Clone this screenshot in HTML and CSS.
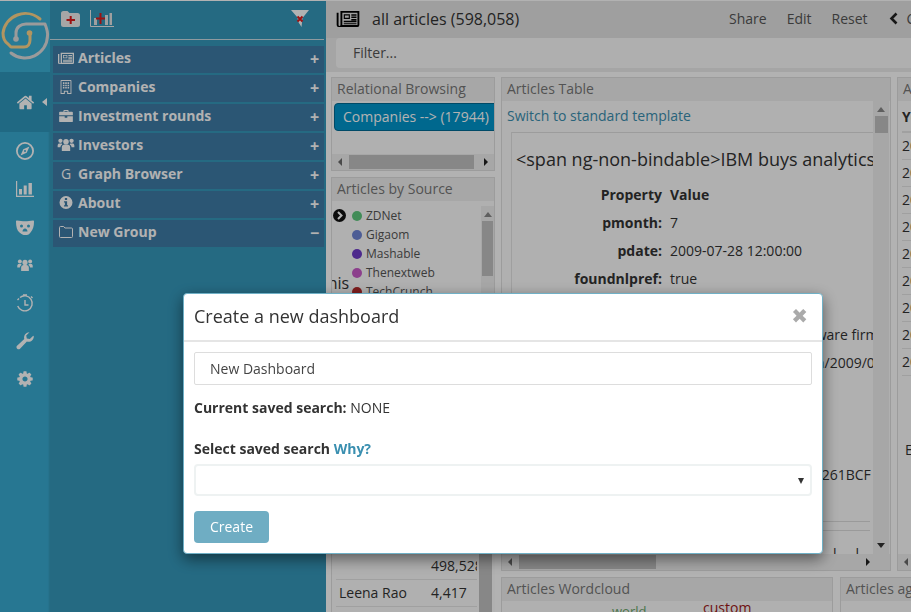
FILE: index.html
```html
<!DOCTYPE html>
<html lang="en">
<head>
<meta charset="utf-8">
<title>all articles</title>
<link rel="stylesheet" href="styles.css">
</head>
<body>
<svg class="defs" width="0" height="0">
  <symbol id="i-news" viewBox="0 0 24 18"><path d="M0 3h2v13a1 1 0 0 0 2 0V1h20v15a2 2 0 0 1-2 2H2a2 2 0 0 1-2-2zm6 0v13a3 3 0 0 1 0 0h16V3zm1.500 1.500h6.500v5H7.500zm1.200 1.200v2.600h4.100V5.700zM15.500 4.500H21V6h-5.500zm0 2.500H21v1.500h-5.500zm0 2.500H21V11h-5.500zM7.500 11.500H21V13H7.500zm0 2.500H21v1.200H7.500z" fill-rule="evenodd"/></symbol>
  <symbol id="i-building" viewBox="0 0 14 18"><path d="M1 0h12a1 1 0 0 1 1 1v17H8.500v-3h-3v3H0V1a1 1 0 0 1 1-1zm.2 1.200v15.600h3v-3h5.600v3h3V1.200zM3 3h2v2H3zm3 0h2v2H6zm3 0h2v2H9zM3 6h2v2H3zm3 0h2v2H6zm3 0h2v2H9zM3 9h2v2H3zm3 0h2v2H6zm3 0h2v2H9z" fill-rule="evenodd"/></symbol>
  <symbol id="i-case" viewBox="0 0 16 14"><path d="M5 2V1a1 1 0 0 1 1-1h4a1 1 0 0 1 1 1v1h4a1 1 0 0 1 1 1v3H0V3a1 1 0 0 1 1-1zm1.200 0h3.600V1.200H6.200zM0 7.200h6.500V9h3V7.200H16V13a1 1 0 0 1-1 1H1a1 1 0 0 1-1-1z" fill-rule="evenodd"/></symbol>
  <symbol id="i-users" viewBox="0 0 18 14"><circle cx="9" cy="4" r="3"/><circle cx="3" cy="3" r="2.300"/><circle cx="15" cy="3" r="2.300"/><path d="M4.500 14V10c0-2 1.500-3 3-3h3c1.500 0 3 1 3 3v4zM0 10V8c0-1.500 1-2.200 2-2.200h2.500A4 4 0 0 0 5 7c-1 .5-1.800 1.500-2 3zm18 0V8c0-1.500-1-2.200-2-2.200h-2.500A4 4 0 0 1 13 7c1 .5 1.800 1.500 2 3z"/></symbol>
  <symbol id="i-info" viewBox="0 0 14 14"><path d="M7 0a7 7 0 1 1 0 14A7 7 0 0 1 7 0zM5.800 2.200v2h2.400v-2zM4.800 5.600v1.300h1v3H4.800v1.400h4.400V9.900h-1V5.600z" fill-rule="evenodd"/></symbol>
  <symbol id="i-folder" viewBox="0 0 14 12"><path d="M1.500.5h3.200l1.200 1.500h6.600a1 1 0 0 1 1 1v7.500a1 1 0 0 1-1 1h-11a1 1 0 0 1-1-1V1.500a1 1 0 0 1 1-1z" fill="none" stroke="currentColor"/></symbol>
  <symbol id="i-home" viewBox="0 0 1792 1792"><path d="M1472 992v480q0 26-19 45t-45 19h-384v-384h-256v384h-384q-26 0-45-19t-19-45v-480q0-1 .5-3t.5-3l575-474 575 474q1 2 1 6zm223-69l-62 74q-8 9-21 11h-3q-13 0-21-7l-692-577-692 577q-12 8-24 7-13-2-21-11l-62-74q-8-10-7-23.500t11-21.500l719-599q32-26 76-26t76 26l244 204v-195q0-14 9-23t23-9h192q14 0 23 9t9 23v408l219 182q10 8 11 21.500t-7 23.500z"/></symbol>
  <symbol id="i-cog" viewBox="0 0 1792 1792"><path d="M1152 896q0-106-75-181t-181-75-181 75-75 181 75 181 181 75 181-75 75-181zm512-109v222q0 12-8 23t-20 13l-185 28q-19 54-39 91 35 50 107 138 10 12 10 25t-9 23q-27 37-99 108t-94 71q-12 0-26-9l-138-108q-44 23-91 38-16 136-29 186-7 28-36 28h-222q-14 0-24.500-8.500t-11.500-21.500l-28-184q-49-16-90-37l-141 107q-10 9-25 9-14 0-25-11-126-114-165-168-7-10-7-23 0-12 8-23 15-21 51-66.500t54-70.500q-27-50-41-99l-183-27q-13-2-21-12.500t-8-23.500v-222q0-12 8-23t19-13l186-28q14-46 39-92-40-57-107-138-10-12-10-24 0-10 9-23 26-36 98.500-107.500t94.500-71.500q13 0 26 10l138 107q44-23 91-38 16-136 29-186 7-28 36-28h222q14 0 24.500 8.500t11.500 21.500l28 184q49 16 90 37l142-107q9-9 24-9 13 0 25 10 129 119 165 170 7 8 7 22 0 12-8 23-15 21-51 66.500t-54 70.500q26 50 41 98l183 28q13 2 21 12.500t8 23.500z"/></symbol>
</svg>

<div class="app">
  <nav class="rail">
    <div class="logo">
      <svg width="50" height="71" viewBox="0 1 50 71" fill="none" stroke-width="3" stroke-linecap="round" stroke-linejoin="round">
        <path d="M40 19A22.500 22.500 0 0 0 3 33C3 38 5 42 8 44L11 47H24C28 47 30 44 30 40V33" stroke="#ffd68a"/>
        <path d="M16 39V33C16 27 21 24 26 24H45C47 29 48 32 47.500 36A22.500 22.500 0 0 1 11 53" stroke="#dedede"/>
        <circle cx="16" cy="39" r="2.800" fill="#dedede" stroke="none"/>
        <circle cx="29.500" cy="33" r="2.800" fill="#ffd68a" stroke="none"/>
      </svg>
    </div>
    <div class="rail-home">
      <svg class="r-ico" width="19" height="19"><use href="#i-home"/></svg>
      <span class="home-caret"></span>
    </div>
    <ul class="rail-list">
      <li><svg width="18" height="18" viewBox="0 0 18 18"><path d="M9 0a9 9 0 1 1 0 18A9 9 0 0 1 9 0zm0 1.800a7.200 7.200 0 1 0 0 14.400A7.200 7.200 0 0 0 9 1.800zM13.500 4.500l-2.800 6.200-6.200 2.800 2.800-6.200zM9 8a1 1 0 1 0 0 2 1 1 0 0 0 0-2z" fill-rule="evenodd"/></svg></li>
      <li><svg width="18" height="16" viewBox="0 0 18 16"><path d="M0 0h1.200v14.800H18V16H0zM3 8h3v5.500H3zm4.700-3.500h3v9h-3zM12.500 2h3.400v11.500h-3.400z"/></svg></li>
      <li><svg width="18" height="15" viewBox="0 0 18 15"><path d="M1 .5C4 1 6 1.300 9 1.300S14 1 17 .5c.7 0 1 .4 1 1 0 5-1 8-3.500 11S11 15 9 15s-3-.5-5.500-2.500S0 6.500 0 1.500c0-.6.300-1 1-1zM5.500 4.500a1.500 1.500 0 1 0 0 3 1.500 1.500 0 0 0 0-3zm7 0a1.500 1.500 0 1 0 0 3 1.500 1.500 0 0 0 0-3zM9 8.500c-1.500 0-2.500 1.500-2.500 3h5c0-1.500-1-3-2.500-3z" fill-rule="evenodd"/></svg></li>
      <li><svg width="16" height="12"><use href="#i-users"/></svg></li>
      <li><svg width="18" height="19" viewBox="0 0 18 19" fill="none" stroke="#fff" stroke-width="1.400"><path d="M4 3.500A7.500 7.500 0 1 1 1.700 12"/><path d="M9 6v5h3.500"/><path d="M7 1h4M1.500 6l1.500-1.500M15 2.500l1.500 1.500"/></svg></li>
      <li><svg width="18" height="18" viewBox="0 0 18 18"><path d="M17.800 4.500c0 3-2.400 5.300-5.300 5.300-.6 0-1.100-.1-1.600-.3L3.800 17a2.200 2.200 0 0 1-3-3l7.500-7A5.300 5.300 0 0 1 13.500.2l-3.300 3.300.6 3 3 .6L17.200 3.700c.4.200.6.500.6.800z"/></svg></li>
      <li><svg width="18" height="18"><use href="#i-cog"/></svg></li>
    </ul>
  </nav>

  <aside class="side">
    <header class="side-head">
      <svg width="19" height="16" viewBox="0 0 19 16"><path d="M2.500 0h4l2 2h8a2.500 2.500 0 0 1 2.500 2.500v9a2.500 2.500 0 0 1-2.500 2.500h-14A2.500 2.500 0 0 1 0 13.500v-11A2.500 2.500 0 0 1 2.500 0z" fill="#eee"/><path d="M5.500 9h8.500M9.700 5v8" stroke="#e01b1b" stroke-width="2"/></svg>
      <svg class="side-chart" width="24" height="17" viewBox="0 0 24 17"><path d="M.5 0v16.500H24" fill="none" stroke="#eee"/><path d="M4 8h3v7H4zM15 5h3v10h-3zM19.500 3H22v12h-2.500z" fill="#e4e4e4"/><path d="M6 8.500h9M10.500 3v11" stroke="#e01b1b" stroke-width="2"/></svg>
      <span class="side-spacer"></span>
      <svg width="18" height="18" viewBox="0 0 18 18"><path d="M0 0h18l-6.500 8L10.500 17 7 11.500 6.500 7.500z" fill="#fff"/><path d="M6.500 6.500l5 5M11.500 6.500l-5 5" stroke="#e01b1b" stroke-width="2"/></svg>
    </header>
    <ul class="groups">
      <li class="group"><svg class="g-ico" width="16" height="12"><use href="#i-news"/></svg><span class="g-name">Articles</span><span class="g-sign">+</span></li>
      <li class="group"><svg class="g-ico" width="14" height="14"><use href="#i-building"/></svg><span class="g-name">Companies</span><span class="g-sign">+</span></li>
      <li class="group"><svg class="g-ico" width="15" height="12"><use href="#i-case"/></svg><span class="g-name">Investment rounds</span><span class="g-sign">+</span></li>
      <li class="group"><svg class="g-ico" width="16" height="13"><use href="#i-users"/></svg><span class="g-name">Investors</span><span class="g-sign">+</span></li>
      <li class="group"><span class="g-ico g-letter">G</span><span class="g-name">Graph Browser</span><span class="g-sign">+</span></li>
      <li class="group"><svg class="g-ico" width="13" height="13"><use href="#i-info"/></svg><span class="g-name">About</span><span class="g-sign">+</span></li>
      <li class="group"><svg class="g-ico" width="14" height="12"><use href="#i-folder"/></svg><span class="g-name">New Group</span><span class="g-sign">−</span></li>
    </ul>
  </aside>

  <main class="main">
    <header class="top">
      <svg class="top-ico" width="24" height="17"><use href="#i-news"/></svg>
      <span class="top-title">all articles (598,058)</span>
      <span class="top-links"><a>Share</a><a>Edit</a><a>Reset</a><svg class="chev" width="9" height="13" viewBox="0 0 9 13"><path d="M7.500 1.500L2.500 6.500l5 5" fill="none" stroke="#222" stroke-width="2.600"/></svg><a class="cut">C</a></span>
    </header>
    <div class="filter-bar"><div class="filter">Filter...</div></div>
    <div class="board">
      <div class="col col-a">
        <section class="panel p-rel">
          <h2 class="p-title">Relational Browsing</h2>
          <div class="rel-body"><a class="rel-btn">Companies --&gt; (17944)</a></div>
          <div class="hbar"><i class="arr-l"></i><span class="thumb t-rel"></span><i class="arr-r"></i></div>
        </section>
        <section class="panel p-src">
          <h2 class="p-title">Articles by Source</h2>
          <div class="src-body">
            <div class="legend">
              <div class="lg"><svg class="go" width="13" height="13" viewBox="0 0 13 13"><circle cx="6.500" cy="6.500" r="6.500" fill="#111"/><path d="M5 3l3.500 3.500L5 10" fill="none" stroke="#fff" stroke-width="2"/></svg><span class="dot d1"></span>ZDNet</div>
              <div class="lg"><span class="dot d2"></span>Gigaom</div>
              <div class="lg"><span class="dot d3"></span>Mashable</div>
              <div class="lg"><span class="dot d4"></span>Thenextweb</div>
              <div class="lg"><span class="dot d5"></span>TechCrunch</div>
              <span class="clip-word">this</span>
            </div>
            <div class="vbar vb-src"><i class="arr-u"></i><span class="thumb t-src"></span></div>
          </div>
        </section>
        <section class="panel p-auth">
          <div class="auth-rows">
            <div class="arow"><span class="a-name"></span><span>498,528</span></div>
            <div class="arow"><span class="a-name">Leena Rao</span><span>4,417</span></div>
          </div>
          <div class="vb-auth"></div>
        </section>
      </div>

      <div class="col col-b">
        <section class="panel p-table">
          <h2 class="p-title">Articles Table</h2>
          <div class="tbl-wrap">
            <div class="tbl-main">
              <a class="switch">Switch to standard template</a>
              <div class="doc">
                <div class="doc-title">&lt;span ng-non-bindable&gt;IBM buys analytics firm SPSS</div>
                <table class="doc-table">
                  <tr><th>Property</th><th class="v">Value</th></tr>
                  <tr><th>pmonth:</th><td>7</td></tr>
                  <tr><th>pdate:</th><td>2009-07-28 12:00:00</td></tr>
                  <tr><th>foundnlpref:</th><td>true</td></tr>
                  <tr><th>domain:</th><td>zdnet.com</td></tr>
                  <tr><th>title:</th><td>IBM buys analytic, software firm</td></tr>
                  <tr><th>url:</th><td>https://blogs.zdnet.com/2009/07</td></tr>
                </table>
                <div class="doc-hash">0A7E19C33F0D4D5E8A261BCF</div>
                <div class="doc-rule rule-first"></div>
                <div class="doc-rule"></div>
                <div class="doc-foot">ll</div>
              </div>
            </div>
            <div class="vbar vb-tbl"><i class="arr-u"></i><span class="thumb t-tbl"></span><i class="arr-d"></i></div>
          </div>
          <div class="hbar hb-tbl"><i class="arr-l"></i><span class="thumb t-tblh"></span><i class="arr-r"></i></div>
        </section>
        <div class="row-b">
          <section class="panel p-cloud">
            <h2 class="p-title">Articles Wordcloud</h2>
            <div class="cloud"><span class="w-world">world</span><span class="w-custom">custom</span></div>
          </section>
          <section class="panel p-ag"><h2 class="p-title">Articles ag</h2></section>
        </div>
      </div>

      <div class="col col-c">
        <section class="panel p-years">
          <h2 class="p-title">Articles</h2>
          <div class="years">
            <div class="y y-head">Year</div>
            <div class="y">2009</div><div class="y">2010</div><div class="y">2011</div>
            <div class="y">2012</div><div class="y">2013</div><div class="y">2014</div>
            <div class="y">2015</div><div class="y">2016</div><div class="y">2017</div>
            <div class="y-e">E</div>
          </div>
          <div class="hbar hb-y"><i class="arr-l"></i></div>
        </section>
      </div>
    </div>
  </main>
</div>

<div class="backdrop">
  <div class="modal">
    <header class="m-head">
      <h3 class="m-title">Create a new dashboard</h3>
      <span class="m-close">✖</span>
    </header>
    <div class="m-body">
      <div class="m-input">New Dashboard</div>
      <p class="m-cur"><b>Current saved search:</b> NONE</p>
      <p class="m-sel"><b>Select saved search <a>Why?</a></b></p>
      <div class="m-select"><i class="sel-arrow"></i></div>
      <button class="m-btn" type="button">Create</button>
    </div>
  </div>
</div>
</body>
</html>
```
FILE: styles.css
```css
* { box-sizing: border-box; }
html, body { height: 100%; }
body {
  margin: 0;
  padding-top: 1px;
  background: #fff;
  overflow: hidden;
  font: 14px/20px "Open Sans", sans-serif;
  color: #333;
}
.defs { position: absolute; }
ul { list-style: none; margin: 0; padding: 0; }
h2, h3, p { margin: 0; }

.app { display: flex; height: 611px; width: 911px; overflow: hidden; }

/* Rail */
.rail { width: 50px; flex: none; background: #39abd2; fill: #fff; box-shadow: inset -2px 0 2px -1px rgba(0,0,0,.12); }
.logo { height: 71px; background: #3cb0d6; }
.logo svg { display: block; }
.rail-home { height: 60px; background: #2f97bc; display: flex; align-items: center; padding-left: 16px; gap: 7px; }
.r-ico { display: block; }
.home-caret { width: 0; height: 0; border: 4px solid transparent; border-right: 5px solid #fff; border-left: 0; }
.rail-list li { height: 38px; display: flex; align-items: center; justify-content: center; }

/* Sidebar */
.side { width: 276px; flex: none; background: #3598bb; padding-right: 2px; }
.side-head { height: 39px; border-bottom: 1px solid #ccdde4; display: flex; align-items: center; padding: 0 15px 3px 11px; }
.side-chart { margin-left: 10px; }
.side-spacer { flex: 1; }
.groups { padding: 6px 0 0 3px; }
.group {
  height: 27px;
  margin-bottom: 2px;
  background: #3e7ba6;
  color: #fff;
  fill: #fff;
  display: flex;
  align-items: center;
  padding: 0 0 4px 4px;
  font-weight: 700;
  font-size: 14px;
}
.g-ico { width: 18px; flex: none; margin-right: 3px; text-align: center; font-weight: 400; }
.g-name { flex: 1; }
.g-sign { width: 14px; font-size: 16px; line-height: 20px; height: 20px; margin-top: 3px; flex: none; }

/* Main */
.main { flex: 1; min-width: 0; background: #fff; overflow: hidden; }
.top { height: 37px; background: #e4e4e4; display: flex; align-items: center; padding: 0 0 2px 10px; color: #333; }
.top-ico { flex: none; }
.top-title { font-size: 16px; margin-left: 12px; flex: 1; white-space: nowrap; }
.top-links { display: flex; align-items: center; color: #555; flex: none; width: 182px; white-space: nowrap; }
.top-links a { margin-right: 20px; }
.top-links .cut { margin: 0 -10px 0 9px; }
.chev { flex: none; margin-left: 1px; }
.filter-bar { height: 34px; background: #ededed; padding: 0 0 4px 10px; }
.filter { height: 30px; background: #fbfbfb; border-radius: 4px 0 0 4px; padding: 5px 17px; color: #555; }

.board { display: flex; gap: 6px; padding: 5px 0 0 5px; width: 800px; }
.col { flex: none; display: flex; flex-direction: column; gap: 6px; }
.col-a { width: 164px; }
.col-b { width: 390px; }
.col-c { width: 200px; }
.panel { border: 1px solid #e0e0e0; background: #fcfcfc; overflow: hidden; }
.p-title { font-size: 14px; font-weight: 400; line-height: 22px; height: 23px; padding-left: 5px; background: #f0f0f0; color: #777; white-space: nowrap; }

/* scrollbars */
.hbar { height: 16px; background: #f0f0f0; display: flex; align-items: center; }
.vbar { width: 15px; flex: none; background: #f0f0f0; display: flex; flex-direction: column; align-items: center; }
.thumb { display: block; background: #c2c2c2; }
.arr-l, .arr-r, .arr-u, .arr-d { width: 0; height: 0; flex: none; border: 4px solid transparent; }
.arr-l { border-right: 4px solid #6a6a6a; border-left: 0; margin: 0 7px 0 6px; }
.arr-r { border-left: 4px solid #222; border-right: 0; margin-left: 10px; }
.arr-u { border-bottom: 5px solid #888; border-top: 0; margin: 6px 0 4px; }
.arr-d { border-top: 5px solid #333; border-bottom: 0; margin-top: auto; margin-bottom: 6px; }

/* Relational */
.p-rel { height: 94px; }
.rel-body { height: 53px; padding: 2px 0 0 2px; overflow: hidden; }
.rel-btn { display: block; width: 170px; height: 28px; line-height: 26px; background: #0095cc; border: 1px solid #006a94; border-radius: 4px 0 0 4px; color: #fff; padding-left: 8px; white-space: nowrap; font-size: 14px; }
.t-rel { width: 125px; height: 14px; }

/* Source */
.p-src { height: 170px; }
.src-body { display: flex; padding-top: 5px; }
.legend { flex: 1; position: relative; padding-left: 20px; font-size: 12px; color: #555; line-height: 19px; height: 120px; overflow: hidden; }
.lg { display: flex; align-items: center; height: 19px; position: relative; }
.dot { width: 10px; height: 10px; border-radius: 50%; margin-right: 4px; flex: none; }
.d1 { background: #5fc97e; } .d2 { background: #6f86d6; } .d3 { background: #6f3cc9; } .d4 { background: #c95bc9; } .d5 { background: #b52a2a; }
.go { position: absolute; left: -19px; top: 3px; }
.clip-word { position: absolute; left: -10px; top: 68px; font-size: 16px; color: #333; }
.vb-src { width: 13px; height: 130px; }
.t-src { width: 11px; height: 55px; }

/* Authors */
.p-auth { height: 266px; display: flex; align-items: flex-end; border-width: 0 0 0 1px; padding-bottom: 12px; overflow: visible; }
.auth-rows { width: 145px; padding-left: 4px; flex: none; }
.arow { display: flex; height: 27px; align-items: center; border-bottom: 1px solid #e5e5e5; padding-left: 3px; white-space: nowrap; overflow: hidden; }
.a-name { width: 92px; flex: none; }
.vb-auth { width: 13px; height: 266px; flex: none; background: #c2c2c2; margin: 0 0 -12px 2px; }

/* Table panel */
.p-table { height: 494px; }
.tbl-wrap { display: flex; height: 453px; overflow: hidden; }
.tbl-main { width: 371px; flex: none; padding-left: 5px; overflow: hidden; }
.switch { display: block; height: 31px; line-height: 29px; color: #3a8fb0; white-space: nowrap; }
.doc { border-left: 1px solid #e4e4e4; border-top: 1px solid #e0e0e0; margin-left: 4px; padding: 15px 0 0 4px; width: 400px; }
.doc-title { font-size: 18px; line-height: 22px; white-space: nowrap; color: #333; }
.doc-table { border-collapse: collapse; margin-top: 11px; white-space: nowrap; }
.doc-table th, .doc-table td { height: 28px; padding: 0; font-size: 14px; vertical-align: middle; }
.doc-table th { text-align: right; width: 154px; font-weight: 700; padding-right: 8px; }
.doc-table td, .doc-table .v { text-align: left; font-weight: 400; }
.doc-table .v { font-weight: 700; }
.doc-hash { margin-top: 88px; padding-left: 156px; height: 20px; white-space: nowrap; }
.doc-rule { border-top: 1px solid #ddd; height: 9px; width: 358px; margin-left: -4px; }
.rule-first { margin-top: 36px; }
.doc-foot { padding-left: 317px; letter-spacing: 19px; white-space: nowrap; margin-top: 5px; }
.vb-tbl { width: 16px; }
.t-tbl { width: 13px; height: 17px; }
.t-tblh { width: 137px; height: 14px; }
.hb-tbl .arr-r { margin-left: 210px; }

.row-b { display: flex; gap: 7px; width: 560px; }
.p-cloud { width: 332px; height: 60px; flex: none; }
.p-ag { width: 200px; height: 60px; flex: none; }
.cloud { position: relative; height: 30px; }
.w-world { position: absolute; left: 110px; top: 0; color: #6aa86a; font-size: 13px; }
.w-custom { position: absolute; left: 201px; top: -3px; color: #a01818; font-size: 14px; }

/* Years */
.p-years { height: 494px; }
.years { height: 453px; padding: 3px 0 0 4px; }
.y { height: 27px; line-height: 26px; border-bottom: 1px solid #e5e5e5; }
.y-head { font-weight: 700; height: 29px; border-bottom-width: 2px; }
.y-e { padding: 64px 0 0 3px; }

/* Modal */
.backdrop {
  position: fixed;
  inset: 0;
  background: rgba(0,0,0,.3);
  padding: 293px 0 0 183px;
}
.modal {
  width: 640px;
  height: 261px;
  background: #fff;
  border: 1px solid #6fb0c6;
  border-radius: 4px;
  box-shadow: 0 5px 15px rgba(0,0,0,.5);
}
.m-head { height: 48px; border-bottom: 2px solid #e5e5e5; display: flex; align-items: center; justify-content: space-between; padding: 0 14px 2px 10px; }
.m-title { font-size: 18px; font-weight: 400; color: #333; line-height: 24px; }
.m-close { font-size: 20px; color: #aaa; font-family: "DejaVu Sans", sans-serif; line-height: 20px; }
.m-body { padding: 10px 10px 0; }
.m-input { height: 33px; border: 1px solid #ddd; border-radius: 2px; padding: 6px 15px; color: #444; }
.m-cur { margin-top: 13px; }
.m-sel { margin-top: 21px; }
.m-sel a { color: #3a8fb0; }
.m-select { height: 32px; margin-top: 5px; border: 2px solid #eef2f2; border-radius: 4px; position: relative; }
.sel-arrow { position: absolute; right: 6px; top: 12px; border: 3.500px solid transparent; border-top: 6px solid #333; border-bottom: 0; }
.m-btn { display: block; width: 75px; height: 32px; margin-top: 15px; background: #6fadc3; border: 0; border-radius: 4px; color: #fff; font: 14px/20px "Open Sans", sans-serif; padding: 0; }
```
